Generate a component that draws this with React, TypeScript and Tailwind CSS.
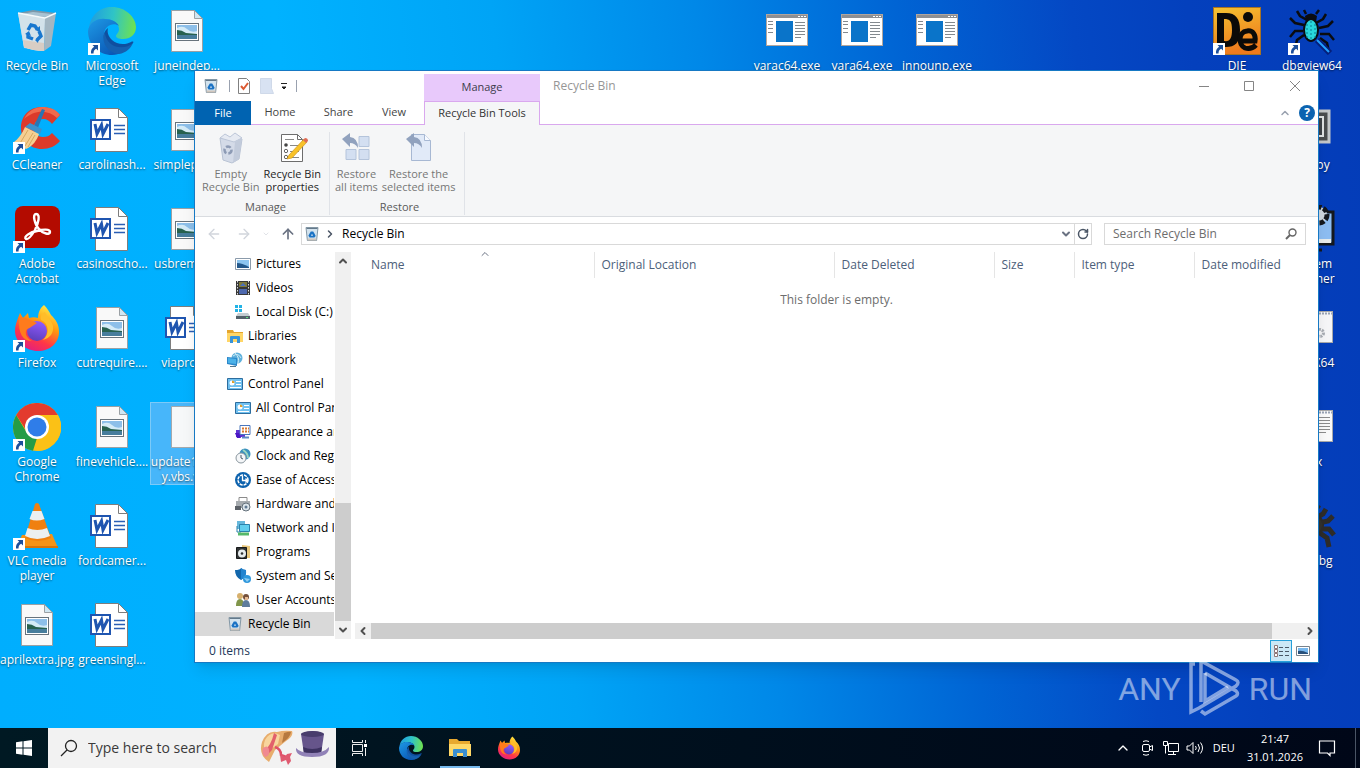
import type { ReactNode } from "react";
import { ArrowLeft, ArrowRight, ArrowUp, ChevronDown, ChevronLeft, ChevronRight, ChevronUp, RotateCw } from "lucide-react";

interface IconProps {
  className?: string;
}

/* ---------- Shared drawings ---------- */

function RecycleBinIcon({ className }: IconProps) {
  return (
    <svg viewBox="0 0 48 48" className={className} aria-hidden="true">
      <path d="M5 6 32 12 31 44 11 41Z" fill="#bcd0de" />
      <path d="M5 6 20 3 43 6 32 12Z" fill="#7c98aa" />
      <path d="M8 7 20 5 39 7 32 10Z" fill="#a9c3d3" />
      <path d="M5 6 32 11 31 44Q20 44 11 40Z" fill="#d3e2ea" />
      <path d="M32 11 43 6 38 39 31 44Z" fill="#a3b6c2" />
      <path d="M5 6 32 11 43 6" fill="none" stroke="#f5fafc" strokeWidth="1.4" />
      <path d="M10 33 31 36 31 44Q20 44 11 40Z" fill="#d8cdc4" />
      <g fill="none" stroke="#1777cf" strokeWidth="3.4">
        <path d="m15 23 3-5 4 1 2 3" />
        <path d="m26 24 2 5-4 4" />
        <path d="m20 32-5-2 0-4" />
      </g>
      <path d="m22 23 5 2 0-6ZM26 30l-4 3 3 3ZM12 27l4-3 2 5Z" fill="#1777cf" />
    </svg>
  );
}

function MiniBinIcon({ className }: IconProps) {
  return (
    <svg viewBox="0 0 16 16" className={className} aria-hidden="true">
      <path d="M2 1.5h12l-1.400 13H3.400Z" fill="#d3e3ee" stroke="#8397a5" />
      <path d="M2.500 2.500h11" stroke="#64798a" />
      <path d="M3.500 12.500h9l-.3 2H3.800Z" fill="#cfc5bc" />
      <path d="m5.300 8 1.500-2.600h2.400L10.700 8l1 1.900-1.300 1.600H5.600L4.400 9.800Z" fill="#1a72c4" />
      <path d="m7 9.700 1-2 1 2Z" fill="#e1edf5" />
    </svg>
  );
}

function EdgeIcon({ className }: IconProps) {
  return (
    <svg viewBox="0 0 48 48" className={className} aria-hidden="true">
      <defs>
        <linearGradient id="edge-top" x1="0" y1="0.4" x2="1" y2="0.5">
          <stop offset="0" stopColor="#1f9de0" />
          <stop offset="0.5" stopColor="#2fc4c6" />
          <stop offset="1" stopColor="#6fe24f" />
        </linearGradient>
        <linearGradient id="edge-body" x1="0" y1="0" x2="0.7" y2="1">
          <stop offset="0" stopColor="#1e9ae6" />
          <stop offset="1" stopColor="#0a57b5" />
        </linearGradient>
      </defs>
      <path d="M1 22C2 8 12 0 24 0c13 0 24 10 24 20 0 8-6 12-13 12-4 0-7-1-7-3s3-3 3-7c0-5-6-10-14-10C8 12 2 17 1 22Z" fill="url(#edge-top)" />
      <path d="M0 24C1 16 9 11 17 12c7 0 12 3 14 7-5-4-15-1-15 9 0 11 9 19 18 17-3 2-6 3-10 3C11 48 0 38 0 24Z" fill="url(#edge-body)" />
      <path d="M20 21c-8 6-4 18 6 21 8 3 15-1 19-6 1-1 0-2-2-1-5 3-14 3-19-2-4-4-5-8-4-12Z" fill="#0f4f9f" />
      <path d="M17 25c-5 10 3 21 14 22 7-1 12-6 14-11-5 5-16 6-22 1-4-3-6-8-6-12Z" fill="#1560b0" />
    </svg>
  );
}

function FirefoxIcon({ className }: IconProps) {
  return (
    <svg viewBox="0 0 48 48" className={className} aria-hidden="true">
      <defs>
        <linearGradient id="fox-body" x1="0.8" y1="0" x2="0.3" y2="1">
          <stop offset="0" stopColor="#fff04a" />
          <stop offset="0.4" stopColor="#ff980e" />
          <stop offset="0.72" stopColor="#ff3647" />
          <stop offset="1" stopColor="#e01e83" />
        </linearGradient>
        <linearGradient id="fox-globe" x1="0.6" y1="0" x2="0.3" y2="1">
          <stop offset="0" stopColor="#9059ff" />
          <stop offset="1" stopColor="#5a3fb8" />
        </linearGradient>
      </defs>
      <path d="M31 1c3 3 5 6 7 10 5 5 8 9 8 17 0 11-9 19-21 19S2 38 2 27c0-6 2-10 3-13l2-5 3 5 5-5 1 5c3-1 6-1 9 0 0-5 2-10 6-13Z" fill="url(#fox-body)" />
      <circle cx="24" cy="27" r="10" fill="url(#fox-globe)" />
      <path d="M6 14c4-1 8 0 11 2l7 3-6 4c-2 2-4 1-5 4-1 4 2 8 6 10C10 37 5 30 6 14Z" fill="#ff7b1c" />
      <path d="M28 16c8 3 9 14 2 20 7-2 11-7 10-14-1-5-6-9-8-14-4 2-5 5-4 8Z" fill="#ffbd29" />
    </svg>
  );
}

function ChromeIcon({ className }: IconProps) {
  return (
    <svg viewBox="0 0 48 48" className={className} aria-hidden="true">
      <circle cx="24" cy="24" r="24" fill="#fbc116" />
      <path d="M3.200 12 14 30 24 35 20 47.700A24 24 0 0 1 3.200 12Z" fill="#259c46" />
      <path d="M24 12H45a24 24 0 0 1-22 36l11-19Z" fill="#fbc116" />
      <path d="M3.200 12A24 24 0 0 1 44.800 12H24L13 27Z" fill="#e33b2e" />
      <circle cx="24" cy="24" r="12" fill="#fff" />
      <circle cx="24" cy="24" r="9.500" fill="#2f7de9" />
    </svg>
  );
}

function CCleanerIcon({ className }: IconProps) {
  return (
    <svg viewBox="0 0 48 48" className={className} aria-hidden="true">
      <path d="M47 9C42 3 35 1 29 1 16 1 8 10 8 22s9 21 21 21c7 0 14-3 18-8l-8-8c-3 3-5 4-9 4-6 0-9-4-9-9 0-6 4-9 9-9 4 0 7 2 9 5Z" fill="#dc3a2b" />
      <path d="M29 1c7 0 14 2 18 8l-3 3C35 3 21 4 11 13 15 5 22 1 29 1Z" fill="#f06a4d" />
      <path d="m29 3 3 1-8 20-4-2Z" fill="#2876b4" />
      <path d="m17 17 12 6-2 5-15-7Z" fill="#3c92cc" />
      <path d="m12 21 14 7c-2 6-6 12-13 15L1 36c4-3 8-8 11-15Z" fill="#f5cf92" />
      <path d="m15 24-9 15m14-12-8 13m10-11-7 12" stroke="#d9a75e" />
    </svg>
  );
}

function AcrobatIcon({ className }: IconProps) {
  return (
    <svg viewBox="0 0 48 48" className={className} aria-hidden="true">
      <rect x="2" y="1" width="45" height="42" rx="8" fill="#b30b00" />
      <path
        d="M23 9c5 0 2 10-1 16-3 5-7 10-9 9-3-2 4-7 11-8 6-2 13-2 13 1s-7 2-11-3c-4-4-7-15-3-15Z"
        fill="none"
        stroke="#fff"
        strokeWidth="2.4"
      />
    </svg>
  );
}

function VlcIcon({ className }: IconProps) {
  return (
    <svg viewBox="0 0 48 48" className={className} aria-hidden="true">
      <path d="m9 33 30-1 6 14H3Z" fill="#f59316" />
      <path d="M3 44h42v2H3Z" fill="#d97508" />
      <path d="M22 2q2-2 4 0l12 34q-13 6-26 0Z" fill="#f08010" />
      <path d="m19.500 9 9 0 3 8q-8 3-15 0ZM14.500 26q10 4 19.500 0l3 8q-13 6-25 0Z" fill="#eceff1" />
    </svg>
  );
}

function WordDocIcon({ className }: IconProps) {
  return (
    <svg viewBox="0 0 48 48" className={className} aria-hidden="true">
      <path d="M7.500 2.500h23l9 9v34h-32Z" fill="#fff" stroke="#7d7d7d" />
      <path d="M30.500 2.500v9h9" fill="none" stroke="#7d7d7d" />
      <path d="M26 19.500h11M26 23.500h11M26 27.500h11" stroke="#2b5fb5" strokeWidth="1.300" />
      <rect x="3" y="14" width="19" height="19" fill="#fff" stroke="#1f55b0" strokeWidth="2" />
      <path d="m7 18 2 10 4.500-9 1.500 9 5-10" fill="none" stroke="#1f55b0" strokeWidth="3" />
    </svg>
  );
}

function ImageFileIcon({ className }: IconProps) {
  return (
    <svg viewBox="0 0 48 48" className={className} aria-hidden="true">
      <path d="M8.500 3.500h23l8 8v33h-31Z" fill="#f9f9f9" stroke="#9aa0a4" />
      <path d="M31.500 3.500v8h8Z" fill="#cfe6f2" stroke="#9aa0a4" />
      <rect x="12.500" y="16.500" width="23" height="17" fill="#fff" stroke="#68737c" />
      <path d="M14 18h20v14H14Z" fill="#8dbfe9" />
      <path d="M14 21q6-3 10 1t10 2v5H14Z" fill="#d4ebf7" />
      <path d="M14 23q5 0 9 3l11 1v2H14Z" fill="#27614f" />
      <path d="M14 28h20v4H14Z" fill="#477d9c" />
    </svg>
  );
}

function BlankFileIcon({ className }: IconProps) {
  return (
    <svg viewBox="0 0 48 48" className={className} aria-hidden="true">
      <path d="M8.500 3.500h23l8 8v33h-31Z" fill="#f6f8f9" stroke="#a4a9ad" />
      <path d="M31.500 3.500v8h8" fill="none" stroke="#a4a9ad" />
    </svg>
  );
}

function ExeIcon({ className }: IconProps) {
  return (
    <svg viewBox="0 0 48 48" className={className} aria-hidden="true">
      <rect x="3.500" y="7.500" width="41" height="31" fill="#fff" stroke="#b2a69e" />
      <path d="M4 8h40v3H4Z" fill="#8d8f93" />
      <path d="M35 9.500h8" stroke="#fff" strokeDasharray="2 1" />
      <path d="M13 14h17v21H13Z" fill="#0a74c9" />
      <path d="M5 14.500h5M5 17.500h5M5 21.500h5M5 25.500h5M32 15.500h10M32 18.500h10M32 21.500h10M32 24.500h10M32 27.500h10M32 30.500h6" stroke="#83898e" />
    </svg>
  );
}

function TextWindowIcon({ className }: IconProps) {
  return (
    <svg viewBox="0 0 48 48" className={className} aria-hidden="true">
      <rect x="3.500" y="7.500" width="41" height="31" fill="#fafafa" stroke="#a9a9a9" />
      <path d="M4 9.500h40" stroke="#9aa4b5" strokeWidth="2" strokeDasharray="2 1" />
      <path d="M8 14.500h34M8 17.500h34M8 20.500h34M8 23.500h34M8 26.500h34M8 29.500h30" stroke="#8c8c8c" />
    </svg>
  );
}

function GearWindowIcon({ className }: IconProps) {
  return (
    <svg viewBox="0 0 48 48" className={className} aria-hidden="true">
      <rect x="3.500" y="7.500" width="41" height="31" fill="#f6f6f8" stroke="#a9a9a9" />
      <path d="M4 9.500h40" stroke="#9aa4b5" strokeWidth="2" strokeDasharray="2 1" />
      <circle cx="32" cy="29" r="3.500" fill="none" stroke="#a8acb3" strokeWidth="3" strokeDasharray="2 1" />
    </svg>
  );
}

function DieIcon({ className }: IconProps) {
  return (
    <svg viewBox="0 0 48 48" className={className} aria-hidden="true">
      <defs>
        <linearGradient id="die-bg" x1="0" y1="0" x2="0.3" y2="1">
          <stop offset="0" stopColor="#f5c431" />
          <stop offset="1" stopColor="#ee7a1d" />
        </linearGradient>
      </defs>
      <rect x="0.500" y="0.500" width="47" height="47" fill="url(#die-bg)" stroke="#a97322" />
      <path fillRule="evenodd" d="M4 6h9c10 0 14 6 14 17 0 13-5 17-14 17H4Zm7 6v22c6 1 8-3 8-11 0-9-2-11-8-11Z" fill="#0b0a08" />
      <circle cx="35" cy="10" r="5" fill="#0b0a08" />
      <path d="M43 38q-5 5-11 3c-7-3-7-16 2-17 6-1 9 4 8 10H28" fill="none" stroke="#0b0a08" strokeWidth="5" />
    </svg>
  );
}

function BugIcon({ className, body = "#28d7dc", legs = "#0a0c10", lens = true }: IconProps & { body?: string; legs?: string; lens?: boolean }) {
  return (
    <svg viewBox="0 0 48 48" className={className} aria-hidden="true">
      <path
        d="m19 13-7-4-3-5m7 14-9-2-5-5m13 13H7l-5 6m14-2-7 5-2 9m21-26 7-4 3-5m-7 14 9-2 5-5m-13 13h9l5 6m-14-2 7 5 2 9M18 7l-2-4m12 4 3-4"
        fill="none"
        stroke={legs}
        strokeWidth={lens ? 2.5 : 5}
      />
      <path d="M17 9q6-5 12 0l-1 6H18Z" fill={legs} />
      <ellipse cx="23" cy="23" rx={lens ? 7 : 12} ry="11" fill={body} stroke={legs} strokeWidth="2" />
      {lens && (
        <>
          <path d="M19 17v14M23 14v19M27 17v14" stroke="#0b7d94" strokeDasharray="2 2" />
          <path d="m29 33 13 13" stroke="#051f7a" strokeWidth="6" />
          <path d="m29 33 12 12" stroke="#20a0ff" strokeWidth="2" />
        </>
      )}
    </svg>
  );
}

function TerminalIcon({ className }: IconProps) {
  return (
    <svg viewBox="0 0 48 48" className={className} aria-hidden="true">
      <path d="M8 5h33v31H8Z" fill="#4a4c4e" stroke="#c4c7c9" strokeWidth="3" />
      <path d="M12 11h23v19H12Z" fill="#3e4247" stroke="#e0e2e3" strokeWidth="2" />
    </svg>
  );
}

function SystemIcon({ className }: IconProps) {
  return (
    <svg viewBox="0 0 48 48" className={className} aria-hidden="true">
      <path d="M5 7h40v32H5Z" fill="#8dbdf2" stroke="#14181d" strokeWidth="3" />
      <path d="M7 34h36v4H7Z" fill="#e8ecec" />
      <circle cx="31" cy="10" r="8" fill="#cfd8df" stroke="#14181d" strokeWidth="5" strokeDasharray="5 2" />
      <path d="M16 45h18" stroke="#14181d" strokeWidth="3" />
    </svg>
  );
}

/* ---------- Desktop ---------- */

interface DesktopItem {
  label: string;
  col: number;
  row: number;
  icon: (props: IconProps) => ReactNode;
  shortcut?: boolean;
  selected?: boolean;
}

const XdbgIcon = (props: IconProps) => <BugIcon {...props} body="#33332f" legs="#2e2c29" lens={false} />;
const DebugViewIcon = (props: IconProps) => <BugIcon {...props} />;

const desktopItems: DesktopItem[] = [
  { label: "Recycle Bin", col: 1, row: 1, icon: RecycleBinIcon },
  { label: "CCleaner", col: 1, row: 2, icon: CCleanerIcon, shortcut: true },
  { label: "Adobe Acrobat", col: 1, row: 3, icon: AcrobatIcon, shortcut: true },
  { label: "Firefox", col: 1, row: 4, icon: FirefoxIcon, shortcut: true },
  { label: "Google Chrome", col: 1, row: 5, icon: ChromeIcon, shortcut: true },
  { label: "VLC media player", col: 1, row: 6, icon: VlcIcon, shortcut: true },
  { label: "aprilextra.jpg", col: 1, row: 7, icon: ImageFileIcon },
  { label: "Microsoft Edge", col: 2, row: 1, icon: EdgeIcon, shortcut: true },
  { label: "carolinash...", col: 2, row: 2, icon: WordDocIcon },
  { label: "casinoscho...", col: 2, row: 3, icon: WordDocIcon },
  { label: "cutrequire....", col: 2, row: 4, icon: ImageFileIcon },
  { label: "finevehicle....", col: 2, row: 5, icon: ImageFileIcon },
  { label: "fordcamer...", col: 2, row: 6, icon: WordDocIcon },
  { label: "greensingl...", col: 2, row: 7, icon: WordDocIcon },
  { label: "juneindep...", col: 3, row: 1, icon: ImageFileIcon },
  { label: "simplepict...", col: 3, row: 2, icon: ImageFileIcon },
  { label: "usbremov...", col: 3, row: 3, icon: ImageFileIcon },
  { label: "viapro.rtf", col: 3, row: 4, icon: WordDocIcon },
  { label: "update1days y.vbs.vbs", col: 3, row: 5, icon: BlankFileIcon, selected: true },
  { label: "yarac64.exe", col: 11, row: 1, icon: ExeIcon },
  { label: "yara64.exe", col: 12, row: 1, icon: ExeIcon },
  { label: "innounp.exe", col: 13, row: 1, icon: ExeIcon },
  { label: "DIE", col: 17, row: 1, icon: DieIcon, shortcut: true },
  { label: "dbgview64", col: 18, row: 1, icon: DebugViewIcon, shortcut: true },
  { label: "scrcpy", col: 18, row: 2, icon: TerminalIcon },
  { label: "System Scanner", col: 18, row: 3, icon: SystemIcon },
  { label: "HxDX64", col: 18, row: 4, icon: GearWindowIcon },
  { label: "hex", col: 18, row: 5, icon: TextWindowIcon },
  { label: "x64dbg", col: 18, row: 6, icon: XdbgIcon }
];

function Desktop() {
  return (
    <div className="grid grid-cols-[repeat(18,74px)] grid-rows-[repeat(7,99px)] items-start gap-x-px pt-1.5">
      {desktopItems.map((item) => {
        const Icon = item.icon;
        return (
          <button
            key={item.label}
            type="button"
            style={{ gridColumn: item.col, gridRow: item.row }}
            className={`flex flex-col items-center gap-[3px] border text-center text-xs leading-[15px] text-white [text-shadow:0_1px_2px_rgba(0,0,0,0.6)] ${
              item.selected ? "border-[#7ccaf8] bg-[#47b6fa]" : "border-transparent"
            }`}
          >
            <span className="relative block h-12 w-12">
              <Icon className="h-12 w-12" />
              {item.shortcut && (
                <svg viewBox="0 0 12 12" className="absolute bottom-0 left-0 h-3 w-3" aria-hidden="true">
                  <path d="M0 0h12v12H0Z" fill="#fff" />
                  <path d="M4.500 2H10v5.500L8.200 5.800Q5.500 7 5.500 10.500H3Q2.500 6 6.200 3.800Z" fill="#1d4f9b" />
                </svg>
              )}
            </span>
            <span>{item.label}</span>
          </button>
        );
      })}
    </div>
  );
}

/* ---------- Explorer ribbon ---------- */

const EmptyBinIcon = () => (
  <svg viewBox="0 0 32 32" className="h-8 w-8" aria-hidden="true">
    <path d="m5 6 22 1-3 20-7 4-9-3Z" fill="#d4dbe8" stroke="#b9c3d4" />
    <path d="m5 6 5-4 5 3 5-4 7 5-8 4Z" fill="#e6eaf2" stroke="#bcc6d8" />
    <path d="m20 10 7-4-3 21-6 4Z" fill="#c2cbdb" />
    <circle cx="13" cy="18" r="3.500" fill="none" stroke="#8d9bb5" strokeWidth="2.500" strokeDasharray="5 2" />
  </svg>
);

const PropertiesIcon = () => (
  <svg viewBox="0 0 32 32" className="h-8 w-8" aria-hidden="true">
    <path d="M5.500 2.500h16l5 5v22h-21Z" fill="#fff" stroke="#6d6d6d" />
    <path d="M21.500 2.500v5h5" fill="none" stroke="#6d6d6d" />
    <circle cx="10" cy="13" r="1.800" fill="#444" />
    <circle cx="10" cy="19" r="1.700" fill="none" stroke="#666" />
    <circle cx="10" cy="25" r="1.700" fill="none" stroke="#666" />
    <path d="M9 7.500h9M14 13.500h9M14 19.500h9M14 25.500h9" stroke="#888" />
    <path d="m13 23 15-16 3 3-15 16-5 1Z" fill="#f8c229" stroke="#c88d10" strokeWidth="0.600" />
    <path d="m27 8 2-2q3 0 3 3l-2 2Z" fill="#de6b55" />
  </svg>
);

const RestoreAllIcon = () => (
  <svg viewBox="0 0 32 32" className="h-8 w-8" aria-hidden="true">
    <path d="M19 4.500h10v10H19ZM6 17.500h10v10H6ZM19 17.500h10v10H19Z" fill="#d3dff1" stroke="#b4c4db" />
    <path d="m2 7 8-6v4q8 1 8 11-3-5-8-5v4Z" fill="#91a2be" />
  </svg>
);

const RestoreSelectedIcon = () => (
  <svg viewBox="0 0 32 32" className="h-8 w-8" aria-hidden="true">
    <path d="M8.500 2.500h13l6 6v20h-19Z" fill="#e1eaf8" stroke="#a7b8d3" />
    <path d="M21.500 2.500v6h6" fill="#f7faff" stroke="#a7b8d3" />
    <path d="m3 7 8-6v4q8 1 8 11-3-5-8-5v4Z" fill="#91a2be" />
  </svg>
);

interface RibbonButtonProps {
  icon: ReactNode;
  lines: [string, string];
  enabled?: boolean;
}

function RibbonButton({ icon, lines, enabled }: RibbonButtonProps) {
  return (
    <button
      type="button"
      disabled={!enabled}
      className={`flex flex-col items-center gap-[3px] whitespace-nowrap text-[11px] leading-[13px] ${enabled ? "text-[#1e1e1e]" : "text-[#767676]"}`}
    >
      {icon}
      <span>
        {lines[0]}
        <br />
        {lines[1]}
      </span>
    </button>
  );
}

function RibbonGroup({ name, className, children }: { name: string; className: string; children: ReactNode }) {
  return (
    <div className={`flex flex-col justify-between border-r border-[#e0e3e8] ${className}`}>
      <div className="flex gap-1">{children}</div>
      <div className="text-center text-[11px] leading-4 text-[#5a5a5a]">{name}</div>
    </div>
  );
}

function TitleBar() {
  return (
    <div className="flex h-[30px] items-stretch">
      <div className="flex w-[229px] items-center gap-1.5 pl-2">
        <MiniBinIcon className="mr-1 h-4 w-4" />
        <span className="h-3 w-px bg-gray-400" />
        <svg viewBox="0 0 16 16" className="h-4 w-4" aria-hidden="true">
          <path d="M2.500.5h8l3 3v12h-11Z" fill="#fff" stroke="#808080" />
          <path d="m5 8 2.500 3L12 5" fill="none" stroke="#dc5a32" strokeWidth="2" />
        </svg>
        <svg viewBox="0 0 16 16" className="h-4 w-4" aria-hidden="true">
          <path d="M2.500.5h11v10l2 5h-13Z" fill="#d8e2f2" stroke="#cfd9e9" />
        </svg>
        <svg viewBox="0 0 8 8" className="h-2 w-2" aria-hidden="true">
          <path d="M1 1.500h6M2 5h4L4 7Z" fill="#222" stroke="#222" />
        </svg>
        <span className="ml-0.5 h-3 w-px bg-gray-400" />
      </div>
      <div className="mt-[3px] flex w-[116px] items-center justify-center bg-[#e8c9fb] text-[11px] text-[#3c3c4c]">Manage</div>
      <h1 className="flex flex-1 items-center pl-[13px] text-xs text-[#969696]">Recycle Bin</h1>
      <div className="flex items-center">
        <button type="button" aria-label="Minimize" className="flex w-[45px] justify-center">
          <svg viewBox="0 0 12 12" className="h-3 w-3"><path d="M1 6.500h10" stroke="#858585" /></svg>
        </button>
        <button type="button" aria-label="Maximize" className="flex w-[45px] justify-center">
          <svg viewBox="0 0 12 12" className="h-3 w-3"><path d="M1.500 1.500h9v9h-9Z" fill="none" stroke="#858585" /></svg>
        </button>
        <button type="button" aria-label="Close" className="flex w-[47px] justify-center">
          <svg viewBox="0 0 12 12" className="h-3 w-3"><path d="m1 1 10 10M11 1 1 11" stroke="#858585" /></svg>
        </button>
      </div>
    </div>
  );
}

function Ribbon() {
  return (
    <>
      <div className="flex h-6 items-stretch text-[11px] text-[#444]">
        <button type="button" className="w-14 bg-[#0063b1] text-white">File</button>
        <button type="button" className="w-[58px] border-b border-[#d9a8ee]">Home</button>
        <button type="button" className="w-[59px] border-b border-[#d9a8ee]">Share</button>
        <button type="button" className="w-14 border-b border-[#d9a8ee] pr-1">View</button>
        <button type="button" className="w-[116px] border-x border-t border-[#d9a8ee] bg-[#f5f6f7] whitespace-nowrap text-[#333]">Recycle Bin Tools</button>
        <div className="flex flex-1 items-center justify-end gap-2 border-b border-[#d9a8ee] pr-[3px]">
          <ChevronUp className="h-3 w-3 text-gray-400" strokeWidth={3} />
          <button type="button" aria-label="Help" className="h-4 w-4 rounded-full bg-[#0b63b0] text-xs leading-4 font-bold text-white">?</button>
        </div>
      </div>
      <div className="flex h-[92px] border-b border-[#d9dce0] bg-[#f5f6f7] pt-[7px] pb-px pl-1">
        <RibbonGroup name="Manage" className="w-[131px] pl-[3px]">
          <RibbonButton icon={<EmptyBinIcon />} lines={["Empty", "Recycle Bin"]} />
          <RibbonButton icon={<PropertiesIcon />} lines={["Recycle Bin", "properties"]} enabled />
        </RibbonGroup>
        <RibbonGroup name="Restore" className="w-[135px] pl-[5px]">
          <RibbonButton icon={<RestoreAllIcon />} lines={["Restore", "all items"]} />
          <RibbonButton icon={<RestoreSelectedIcon />} lines={["Restore the", "selected items"]} />
        </RibbonGroup>
      </div>
    </>
  );
}

function AddressBar() {
  return (
    <div className="flex h-[35px] items-center pr-3 pb-0.5">
      <div className="flex w-[106px] items-center pl-[11px] text-gray-300">
        <ArrowLeft className="h-4 w-4" />
        <ArrowRight className="ml-3.5 h-4 w-4" />
        <ChevronDown className="ml-2.5 h-2 w-2" />
        <ArrowUp className="ml-2.5 h-4 w-4 text-gray-500" strokeWidth={2.5} />
      </div>
      <div className="flex h-[22px] flex-1 items-center border border-[#d9d9d9] pl-0.5 text-xs text-black">
        <MiniBinIcon className="h-4 w-4" />
        <ChevronRight className="ml-1 h-3 w-3 text-gray-600" strokeWidth={3} />
        <span className="ml-1.5 flex-1">Recycle Bin</span>
        <ChevronDown className="mr-0.5 h-3 w-3 text-gray-500" strokeWidth={4} />
        <button type="button" aria-label="Refresh" className="flex h-full w-[17px] items-center justify-center border-l border-[#d9d9d9] text-gray-600">
          <RotateCw className="h-3 w-3" strokeWidth={3} />
        </button>
      </div>
      <label className="ml-3 flex h-[22px] w-[202px] items-center border border-[#d9d9d9] px-2">
        <input type="search" aria-label="Search Recycle Bin" placeholder="Search Recycle Bin" className="min-w-0 flex-1 text-xs outline-none placeholder:text-[#6d6d6d]" />
        <svg viewBox="0 0 12 12" className="h-3 w-3" aria-hidden="true">
          <circle cx="7.500" cy="4.500" r="3.500" fill="none" stroke="#666" strokeWidth="1.400" />
          <path d="M5 7 1 11" stroke="#666" strokeWidth="2" />
        </svg>
      </label>
    </div>
  );
}

/* ---------- Navigation tree ---------- */

const treeDrawings: Record<string, ReactNode> = {
  Pictures: (
    <>
      <path d="M.5 2.500h15v11H.5Z" fill="#fff" stroke="#8b9bab" />
      <path d="M2 4h12v8H2Z" fill="#8cc5f0" />
      <path d="M2 7q5 0 12 4v1H2Z" fill="#23588b" />
    </>
  ),
  Videos: (
    <>
      <path d="M1 1h14v14H1Z" fill="#383838" />
      <path d="M2.500 1v14M13.500 1v14" stroke="#ddd" strokeDasharray="1.500 1.500" />
      <path d="M4 2h8v5H4Z" fill="#7f7a3c" />
      <path d="M4 9h8v5H4Z" fill="#4d68ad" />
      <path d="m5 6 3-3 3 3Z" fill="#496fc1" />
    </>
  ),
  "Local Disk": (
    <>
      <path d="M0 1h3v3H0ZM4 1h3v3H4ZM0 5h3v3H0ZM4 5h3v3H4Z" fill="#22b3e6" />
      <path d="m3 9 10 0 2 3H1Z" fill="#c3ccd1" />
      <path d="M1 12h14v3H1Z" fill="#53616a" />
      <path d="M11 13h2v1h-2Z" fill="#5ee07e" />
    </>
  ),
  Libraries: (
    <>
      <path d="M0 2h6l1 2h9v10H0Z" fill="#e5a52d" />
      <path d="M0 5h16v9H0Z" fill="#ffd667" />
      <path d="M3 15V9q0-1 1-1h8q1 0 1 1v6h-3v-4H6v4Z" fill="#3793da" />
    </>
  ),
  Network: (
    <>
      <circle cx="10" cy="6" r="5.500" fill="#5fb1dc" />
      <path d="M6 4q5-4 8 2M8 1q5 5 3 10" stroke="#cdebf7" fill="none" />
      <path d="m0 5 10 1v8L0 12Z" fill="#2b87ca" />
      <path d="m1 6 8 1v5l-8-1Z" fill="#4ab1e8" />
      <path d="M3 14h6v1H3Z" fill="#55778b" />
    </>
  ),
  "Control Panel": (
    <>
      <path d="M.5 2.500h15v11H.5Z" fill="#6fc0f0" stroke="#2d6d9e" />
      <circle cx="5" cy="7" r="2.500" fill="#fff" />
      <path d="M5 7V4.500A2.500 2.500 0 0 1 7.500 7Z" fill="#e29d28" />
      <path d="M9 5.500h5M9 8.500h5M3 11.500h11" stroke="#fff" />
    </>
  ),
  Appearance: (
    <>
      <path d="M1 6h9v7H1Z" fill="#5f33d2" />
      <path d="M5 1.500h10v9H5Z" fill="#fff" stroke="#4a76bd" />
      <path d="M7 4.500h7M7 7.500h7" stroke="#d8762e" strokeWidth="2" strokeDasharray="2 1" />
      <path d="M0 9h4l2 5H2Z" fill="#4b17c4" />
      <path d="M7 13.500h7" stroke="#5f8bc6" strokeWidth="2" />
    </>
  ),
  Clock: (
    <>
      <circle cx="10" cy="6" r="5.500" fill="#3991bd" />
      <path d="M8 2q5 3 5 8" stroke="#9cd6c0" fill="none" strokeWidth="2" />
      <circle cx="6" cy="10" r="5" fill="#f4f6f8" stroke="#8b979f" />
      <path d="M6 7v3l2 1" stroke="#4b5a66" fill="none" />
    </>
  ),
  Ease: (
    <>
      <circle cx="8" cy="8" r="8" fill="#0e63ae" />
      <circle cx="8" cy="8" r="5" fill="none" stroke="#fff" strokeWidth="1.500" strokeDasharray="3 1" />
      <path d="M7.500 4v4.500H13M10.500 6.500l2 2-2 2" stroke="#fff" fill="none" strokeWidth="1.300" />
    </>
  ),
  Hardware: (
    <>
      <path d="M4 1.500h8v4H4Z" fill="#fff" stroke="#8b8b8b" />
      <path d="M1 5h14v7H1Z" fill="#a6abaf" />
      <path d="M0 10h6v4H0Z" fill="#5b6167" />
      <circle cx="11" cy="11" r="4" fill="#dce5eb" stroke="#65717b" />
      <circle cx="11" cy="11" r="1.500" fill="#5f7890" />
    </>
  ),
  NetworkInternet: (
    <>
      <path d="M2 1h8v8H2Z" fill="#67b8dc" />
      <path d="M4.500 4.500h10v7h-10Z" fill="#60ceee" stroke="#2b81ab" />
      <path d="M2 6v6h4" stroke="#2b81ab" fill="none" />
      <path d="M3 14h11" stroke="#55b96a" strokeWidth="3" />
    </>
  ),
  Programs: (
    <>
      <path d="m7 1 8 1v12H7Z" fill="#e9c77c" />
      <path d="M1.500 3.500h10v11h-10Z" fill="#303334" stroke="#17191a" />
      <circle cx="7" cy="9.500" r="4" fill="#e8edef" />
      <circle cx="7" cy="9.500" r="1.300" fill="#303334" />
    </>
  ),
  System: (
    <>
      <path d="M0 2q5 0 6-2 2 2 5 2 1 7-5 10Q0 9 0 2Z" fill="#1267ac" />
      <path d="M6 0q2 2 5 2 1 7-5 10Z" fill="#2384cf" />
      <circle cx="12" cy="11" r="4" fill="#2f97dc" />
      <path d="m9 10 6 1-3 3Z" fill="#8ccdf2" />
    </>
  ),
  Users: (
    <>
      <circle cx="5" cy="4" r="3" fill="#d7b06d" />
      <path d="M1 14q0-7 4-7t4 7Z" fill="#80954a" />
      <circle cx="11" cy="5" r="3" fill="#75503a" />
      <path d="M7 15q0-7 4-7t4 7Z" fill="#5e7c9c" />
      <path d="M10 5h3v3h-3Z" fill="#e6ba93" />
    </>
  )
};

const treeItems = [
  { label: "Pictures", icon: "Pictures", nested: true },
  { label: "Videos", icon: "Videos", nested: true },
  { label: "Local Disk (C:)", icon: "Local Disk", nested: true },
  { label: "Libraries", icon: "Libraries" },
  { label: "Network", icon: "Network" },
  { label: "Control Panel", icon: "Control Panel" },
  { label: "All Control Panel Items", icon: "Control Panel", nested: true },
  { label: "Appearance and Personalization", icon: "Appearance", nested: true },
  { label: "Clock and Region", icon: "Clock", nested: true },
  { label: "Ease of Access", icon: "Ease", nested: true },
  { label: "Hardware and Sound", icon: "Hardware", nested: true },
  { label: "Network and Internet", icon: "NetworkInternet", nested: true },
  { label: "Programs", icon: "Programs", nested: true },
  { label: "System and Security", icon: "System", nested: true },
  { label: "User Accounts", icon: "Users", nested: true },
  { label: "Recycle Bin", icon: "Bin", selected: true }
];

function NavigationTree() {
  return (
    <nav className="flex w-[156px] shrink-0">
      <ul className="min-w-0 flex-1 overflow-hidden">
        {treeItems.map((item) => (
          <li key={item.label}>
            <a
              href="#"
              className={`flex h-6 items-center gap-[5px] overflow-hidden text-xs whitespace-nowrap text-black ${item.nested ? "pl-10" : "pl-8"} ${
                item.selected ? "bg-[#d9d9d9]" : ""
              }`}
            >
              {item.icon === "Bin" ? (
                <MiniBinIcon className="h-4 w-4 shrink-0" />
              ) : (
                <svg viewBox="0 0 16 16" className="h-4 w-4 shrink-0" aria-hidden="true">
                  {treeDrawings[item.icon]}
                </svg>
              )}
              {item.label}
            </a>
          </li>
        ))}
      </ul>
      <div className="ml-px flex w-4 flex-col items-center bg-[#f0f0f0] text-[#505050]">
        <ChevronUp className="my-[3px] h-3 w-3 shrink-0" strokeWidth={4} />
        <div className="flex-1" />
        <div className="h-[118px] w-full bg-[#cdcdcd]" />
        <ChevronDown className="my-[3px] h-3 w-3 shrink-0" strokeWidth={4} />
      </div>
    </nav>
  );
}

const columns = [
  { name: "Name", width: "w-[230px]" },
  { name: "Original Location", width: "w-60" },
  { name: "Date Deleted", width: "w-40" },
  { name: "Size", width: "w-20" },
  { name: "Item type", width: "w-[120px]" },
  { name: "Date modified", width: "" }
];

function FileList() {
  return (
    <div className="ml-1 flex min-w-0 flex-1 flex-col">
      <table className="ml-[9px] table-fixed text-xs text-[#4c607a]">
        <thead>
          <tr>
            {columns.map((column) => (
              <th key={column.name} className={`relative h-[26px] border-r border-[#e5e5e5] pl-[7px] text-left font-normal last:border-r-0 ${column.width}`}>
                {column.name === "Name" && <ChevronUp className="absolute -top-1 left-1/2 h-3 w-3 text-gray-500" />}
                {column.name}
              </th>
            ))}
          </tr>
        </thead>
      </table>
      <p className="mt-3 flex-1 text-center text-xs leading-5 text-[#6d6d6d]">This folder is empty.</p>
      <div className="flex h-4 items-center bg-[#f0f0f0] text-[#505050]">
        <ChevronLeft className="mx-0.5 h-3 w-3" strokeWidth={4} />
        <div className="mr-[30px] h-full flex-1 bg-[#cdcdcd]" />
        <ChevronRight className="mx-0.5 h-3 w-3" strokeWidth={4} />
      </div>
    </div>
  );
}

function ExplorerWindow() {
  return (
    <section className="absolute top-[70px] right-[41px] bottom-[65px] left-[194px] flex flex-col border border-[#1679c4] bg-white shadow-lg">
      <TitleBar />
      <Ribbon />
      <AddressBar />
      <div className="flex min-h-0 flex-1">
        <NavigationTree />
        <FileList />
      </div>
      <footer className="flex h-[23px] items-center text-xs text-[#1e395b]">
        <span className="flex-1 pl-3.5">0 items</span>
        <button type="button" aria-label="Details" className="flex h-[22px] w-[22px] items-center justify-center border border-[#26a0da] bg-[#cbe8f6]">
          <svg viewBox="0 0 16 16" className="h-4 w-4">
            <path d="M1.500 2.500h3v3h-3ZM1.500 6.500h3v3h-3ZM1.500 10.500h3v3h-3Z" fill="#fff" stroke="#8f7777" />
            <path d="M6 4.500h10M6 8.500h10M6 12.500h10" stroke="#4a5866" strokeDasharray="4 2" />
          </svg>
        </button>
        <button type="button" aria-label="Large icons" className="mr-1 flex h-[22px] w-[22px] items-center justify-center">
          <svg viewBox="0 0 16 16" className="h-4 w-4">
            <path d="M1.500 3.500h13v9h-13Z" fill="#fff" stroke="#78828c" />
            <path d="M3 5h10v6H3Z" fill="#77b8ee" />
            <path d="M3 8q4-1 10 2v1H3Z" fill="#28507b" />
          </svg>
        </button>
      </footer>
    </section>
  );
}

/* ---------- Taskbar ---------- */

const FolderIcon = () => (
  <svg viewBox="0 0 24 24" className="h-6 w-6" aria-hidden="true">
    <path d="M1 3h8l2 2h11v14H1Z" fill="#e8a92f" />
    <path d="M1 8h22v12H1Z" fill="#ffd867" />
    <path d="M5 21v-7q0-1 1-1h12q1 0 1 1v7h-4v-4H9v4Z" fill="#3a8fd0" />
  </svg>
);

const HatsIcon = () => (
  <svg viewBox="0 0 70 36" className="h-9 w-[70px]" aria-hidden="true">
    <path d="M2 12Q7 0 17 2q7-2 15-1 2 5-6 10L15 20 9 32Q-2 25 2 12Z" fill="#e8ad6d" />
    <path d="M5 10Q11 0 20 5l-2 9-11 8Q2 18 5 10Z" fill="#f8d59d" />
    <path d="M24 3q6-2 7-1-1 6-9 11Z" fill="#b7793f" />
    <path d="m14 3 3 2-5 15-5 5-3-4Q11 16 14 3Z" fill="#e2606b" />
    <path d="M3 18q5-4 6 2t-4 7q-4-4-2-9Z" fill="#f08a91" />
    <path d="M15 17q6 2 6 8l8 3" fill="none" stroke="#df5068" strokeWidth="2.500" />
    <path d="m25 27-5-2 1 7 5-2 2 5 3-4-1-4 2-4-5 1Z" fill="#e05a70" />
    <path d="M41 4q12-6 23 0l-3 20H44Z" fill="#66558b" />
    <ellipse cx="52.500" cy="4" rx="11.500" ry="3" fill="#493d6c" />
    <path d="M43 17q9 4 19 0l-1 6H44Z" fill="#3d3261" />
    <path d="M36 18q4 5 16 5t17-6q1 10-17 10-17 0-16-9Z" fill="#9182b7" />
  </svg>
);

function Taskbar() {
  return (
    <footer className="flex h-10 items-stretch bg-gradient-to-r from-[#001923] to-[#000718] text-[11px] text-white">
      <button type="button" aria-label="Start" className="flex w-12 items-center justify-center">
        <svg viewBox="0 0 16 16" className="h-4 w-4">
          <path d="m0 2.300 6.500-1v6.200H0ZM7.500 1.200 16 0v7.500H7.500ZM0 8.500h6.500v6.200l-6.500-1ZM7.500 8.500H16V16l-8.500-1.200Z" fill="#fff" />
        </svg>
      </button>
      <label className="flex w-72 items-center bg-[#f2f2f2] pl-3">
        <svg viewBox="0 0 18 18" className="mr-2.5 h-[18px] w-[18px]" aria-hidden="true">
          <circle cx="11" cy="7" r="5.500" fill="none" stroke="#222" strokeWidth="1.300" />
          <path d="m7 11-6 6" stroke="#222" strokeWidth="1.300" />
        </svg>
        <input type="search" aria-label="Type here to search" placeholder="Type here to search" className="min-w-0 flex-1 text-sm outline-none placeholder:text-[#3a3a3a]" />
        <span className="mr-1.5"><HatsIcon /></span>
      </label>
      <button type="button" aria-label="Task view" className="flex w-12 items-center justify-center">
        <svg viewBox="0 0 16 16" className="h-4 w-4">
          <path d="M.5 0v2.500h10V0M.5 16v-2.500h10V16M.5 4.500h10v7H.5ZM13.500 0v3M13.500 8v8" fill="none" stroke="#eee" />
          <path d="M12 4h3v3h-3Z" fill="#fff" />
        </svg>
      </button>
      <button type="button" aria-label="Microsoft Edge" className="ml-[3px] flex w-12 items-center justify-center">
        <EdgeIcon className="h-6 w-6" />
      </button>
      <button type="button" aria-label="File Explorer" className="mx-[5px] flex w-10 items-center justify-center border-y-2 border-t-transparent border-b-[#76b9ed]">
        <FolderIcon />
      </button>
      <button type="button" aria-label="Firefox" className="flex w-12 items-center justify-center">
        <FirefoxIcon className="h-6 w-6" />
      </button>
      <div className="ml-auto flex items-center">
        <ChevronUp className="h-4 w-4" strokeWidth={2} />
        <svg viewBox="0 0 16 16" className="ml-2 h-4 w-4" fill="none" stroke="#fff" aria-hidden="true">
          <rect x="3.500" y="4.500" width="7" height="7" rx="1.500" />
          <path d="m10.500 7 3-1.500v5l-3-1.500M4 1.500q3-1.500 6 0M4 14.500q3 1.500 6 0" />
        </svg>
        <svg viewBox="0 0 16 16" className="ml-2 h-4 w-4" fill="none" stroke="#fff" aria-hidden="true">
          <path d="M5.500 3.500h10v8h-10ZM.5 1.500h4v4h-4ZM2.500 5.500v8M5 14.500h8M10.500 11.500v3" />
        </svg>
        <svg viewBox="0 0 18 16" className="ml-[7px] h-4 w-[18px]" fill="none" stroke="#fff" aria-hidden="true">
          <path d="M1 6h2.500L7 2.500v11L3.500 10H1ZM9.500 6q1.500 2 0 4M12 4q3 4 0 8M14.500 2.500q4 5.500 0 11" />
        </svg>
        <span className="ml-[9px]">DEU</span>
        <div className="mx-3 text-center leading-[18px]">
          21:47
          <br />
          31.01.2026
        </div>
        <svg viewBox="0 0 18 18" className="ml-[3px] h-[18px] w-[18px]" fill="none" stroke="#fff" strokeWidth="1.200" aria-hidden="true">
          <path d="M1.500 2h15v12H12v2.500L9.500 14h-8Z" />
        </svg>
        <span className="mr-1 ml-[19px] h-10 w-px bg-gray-600" />
      </div>
    </footer>
  );
}

function Watermark() {
  return (
    <div className="absolute right-12 bottom-2 flex items-center font-[Roboto,sans-serif] text-[32px] text-white/50">
      ANY
      <svg viewBox="0 0 56 62" className="mx-1.5 h-[62px] w-14" fill="none" stroke="currentColor" strokeWidth="3.500" aria-hidden="true">
        <path d="M8 6H4v48l8-4 37-22q4-4 0-6L14 3v41M18 15l31 18q3 3 0 5L18 56l-4-3" />
        <path d="m18 15v28l23-14" />
      </svg>
      RUN
    </div>
  );
}

export default function App() {
  return (
    <div className="flex min-h-screen flex-col overflow-hidden bg-[#00aeff] font-['Open_Sans','Noto_Sans',sans-serif]">
      <main className="relative flex-1 overflow-hidden bg-[linear-gradient(83deg,#00aefe_0%,#00b2ff_25%,#00a4f6_40%,#0088e8_54%,#0064d4_68%,#0448c4_80%,#0440bd_88%,#043cb8_100%)]">
        <Desktop />
        <ExplorerWindow />
        <Watermark />
      </main>
      <Taskbar />
    </div>
  );
}
